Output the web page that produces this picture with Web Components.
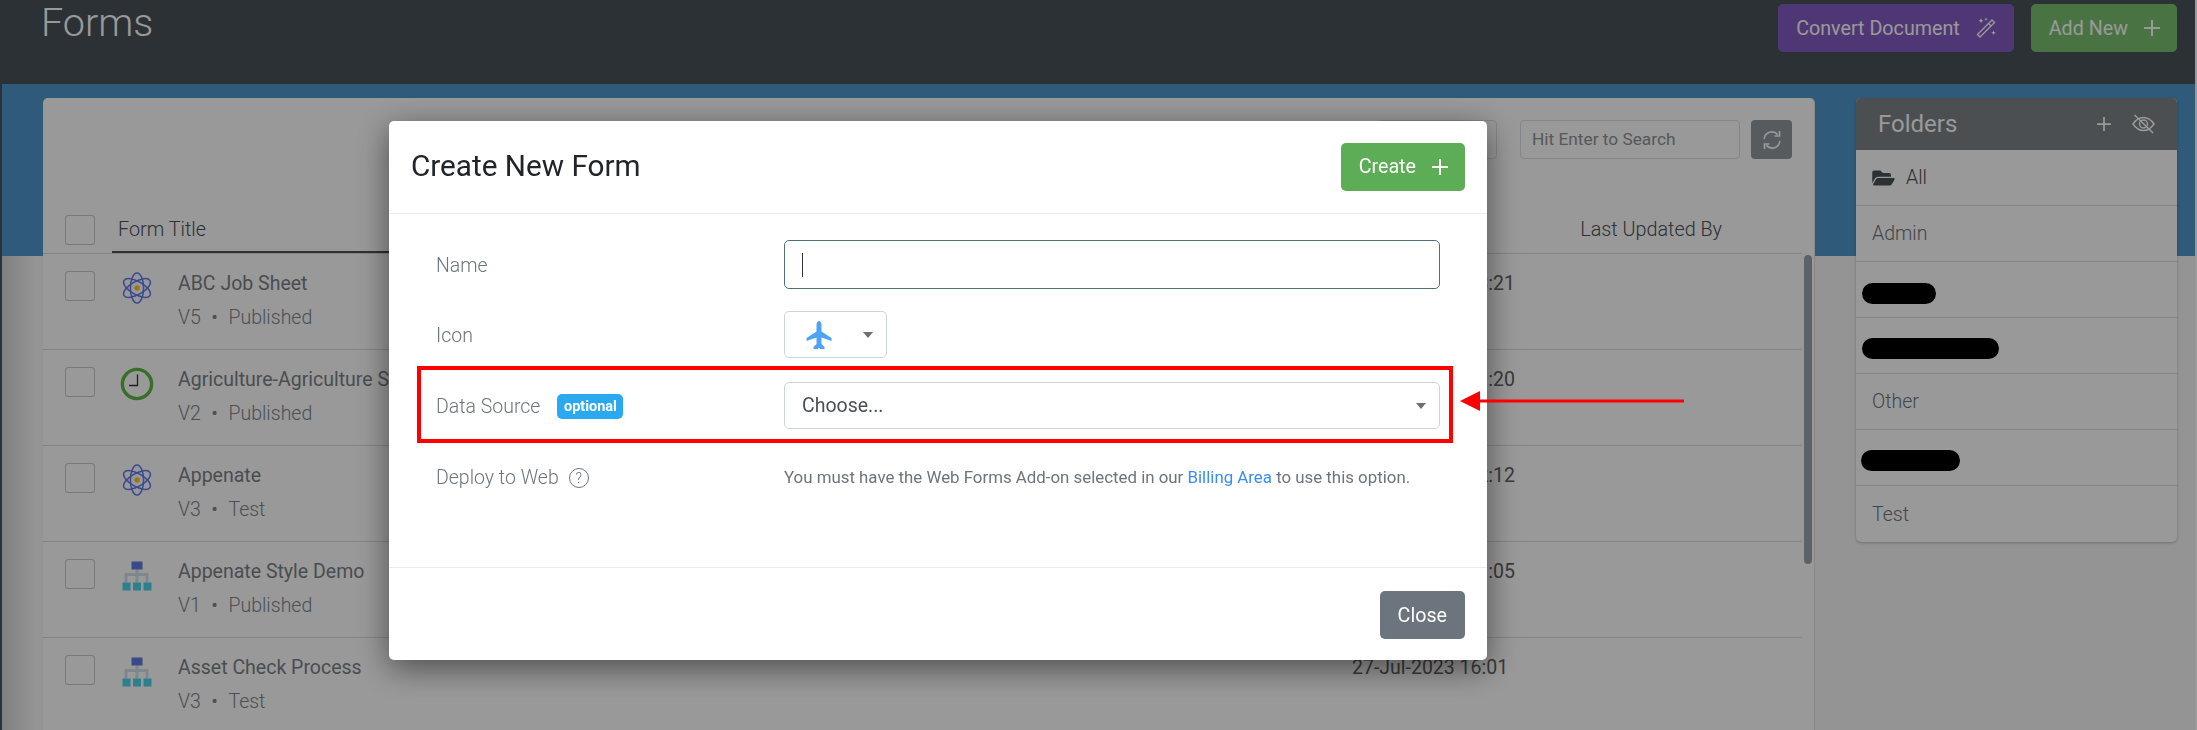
<!DOCTYPE html>
<html>
<head>
<meta charset="utf-8">
<title>Forms</title>
<style>
  html, body { margin: 0; height: 100%; overflow: hidden; }
  body {
    font-family: Roboto, "Liberation Sans", sans-serif;
    background: linear-gradient(90deg, #495257 50%, #fff 50%);
  }
</style>
</head>
<body>
<app-page>
  <page-header slot="header">
    <span slot="title">Forms</span>
    <action-button tone="purple" icon="wand">Convert Document</action-button>
    <action-button tone="lime" icon="plus">Add New</action-button>
  </page-header>
  <forms-card>
    <form-row icon="atom" version="V5" status="Published" time="3:21">ABC Job Sheet</form-row>
    <form-row icon="clock" version="V2" status="Published" time=":20">Agriculture-Agriculture S</form-row>
    <form-row icon="atom" version="V3" status="Test" time="2:12">Appenate</form-row>
    <form-row icon="tree" version="V1" status="Published" time=":05">Appenate Style Demo</form-row>
    <form-row icon="tree" version="V3" status="Test" time="27-Jul-2023 16:01" full>Asset Check Process</form-row>
  </forms-card>
  <folder-panel>
    <folder-item open>All</folder-item>
    <folder-item>Admin</folder-item>
    <folder-item redacted="74" left="6" nudge="7"></folder-item>
    <folder-item redacted="137" left="6" nudge="6"></folder-item>
    <folder-item>Other</folder-item>
    <folder-item redacted="99" left="5" nudge="5"></folder-item>
    <folder-item>Test</folder-item>
  </folder-panel>
</app-page>

<create-form-dialog></create-form-dialog>
<red-callout></red-callout>

<script>
const ICONS = {
  plus: `<svg width="16" height="16" viewBox="0 0 16 16"><path d="M8 0v16M0 8h16" stroke="currentColor" stroke-width="2" fill="none"/></svg>`,
  wand: `<svg width="21" height="22" viewBox="0 0 21 22" fill="none" stroke="currentColor"><path d="M1.5 17.5L16 3l2.5 2.5L4 20z" stroke-width="1.4"/><path d="M12.5 6.5l2.5 2.5" stroke-width="1.2"/><path d="M5 1.2l.8 1.7 1.7.8-1.7.8L5 6.2l-.8-1.7-1.7-.8 1.7-.8zM10 .5l.5 1.2 1.2.5-1.2.5-.5 1.2-.5-1.2-1.2-.5 1.2-.5zM17.5 13.5l.7 1.6 1.6.7-1.6.7-.7 1.6-.7-1.6-1.6-.7 1.6-.7z" fill="currentColor" stroke="none"/></svg>`,
  atom: `<svg width="38" height="38" viewBox="0 0 38 38" fill="none" stroke="#647bee" stroke-width="1.5"><ellipse cx="19" cy="19" rx="6.6" ry="15"/><ellipse cx="19" cy="19" rx="6.6" ry="15" transform="rotate(60 19 19)"/><ellipse cx="19" cy="19" rx="6.6" ry="15" transform="rotate(120 19 19)"/><circle cx="19" cy="19" r="2.8" fill="#ffc04c" stroke="none"/></svg>`,
  clock: `<svg width="38" height="38" viewBox="0 0 38 38" fill="none"><circle cx="19" cy="19" r="14.6" fill="#fff" stroke="#5cb846" stroke-width="3.400"/><path d="M19.5 9.5V20.5H11" stroke="#333" stroke-width="1.3"/></svg>`,
  tree: `<svg width="38" height="38" viewBox="0 0 38 38"><path d="M17.5 12.5h3V16h10v9.5h-3V19h-7v6.5h-3V19h-8v6.5h-3V16h11z" fill="#d5e1e9"/><rect x="13.5" y="4.5" width="11" height="8" fill="#627be1"/><rect x="4.5" y="25.5" width="8" height="8" fill="#4dd5eb"/><rect x="15" y="25.5" width="8" height="8" fill="#4dd5eb"/><rect x="25.5" y="25.5" width="8" height="8" fill="#4dd5eb"/></svg>`,
  sync: `<svg width="20" height="20" viewBox="0 0 20 20" fill="none" stroke="currentColor" stroke-width="1.7"><path d="M2.2 9A7.6 7.6 0 0 1 15.6 4.6"/><path d="M17.8 11A7.6 7.6 0 0 1 4.4 15.4"/><path d="M17.5 1v5h-5M2.5 19v-5h5"/></svg>`,
  eyeoff: `<svg width="23" height="20" viewBox="0 0 23 20" fill="none" stroke="currentColor" stroke-width="1.5"><path d="M1 10c3-4.400 6.400-6.500 10.500-6.500S19 5.600 22 10c-3 4.400-6.400 6.500-10.500 6.500S4 14.400 1 10z"/><circle cx="11.500" cy="10" r="4"/><path d="M2.500 1l18.500 18"/></svg>`,
  folder: `<svg width="23" height="20" viewBox="0 0 576 512"><path fill="#495257" d="M572.694 292.093L500.27 416.248A63.997 63.997 0 0 1 444.989 448H45.025c-18.523 0-30.064-20.093-20.731-36.093l72.424-124.155A64 64 0 0 1 152 256h399.964c18.523 0 30.064 20.093 20.73 36.093zM152 224h328v-48c0-26.51-21.49-48-48-48H272l-64-64H48C21.49 64 0 85.49 0 112v278.046l69.077-118.418C86.214 242.25 117.989 224 152 224z"/></svg>`,
  plane: `<svg width="26" height="28" viewBox="-1 0 26 28"><path fill="#4ea3f5" d="M12 0C13.500 0 14.500 2 14.500 4V10.500L24.500 17V20L14.500 16.500V23L17.500 26V28H13L12 26.500L11 28H6.500V26L9.500 23V16.500L-.5 20V17L9.500 10.500V4C9.500 2 10.500 0 12 0Z"/></svg>`
};

class AppPage extends HTMLElement {
  constructor() {
    super();
    this.attachShadow({ mode: "open" }).innerHTML = `
      <style>
        :host { display: block; height: 730px; margin: 0 2px; overflow: hidden; }
        main {
          display: flex;
          align-items: flex-start;
          gap: 42px;
          height: 646px;
          padding: 14px 18px 0 41px;
          box-sizing: border-box;
          background:
            linear-gradient(90deg, rgba(0, 0, 0, .14), transparent 32px) 0 172px no-repeat,
            linear-gradient(#5096cb 172px, #f7f7f7 172px);
        }
      </style>
      <slot name="header"></slot>
      <main><slot></slot></main>`;
  }
}

class PageHeader extends HTMLElement {
  constructor() {
    super();
    this.attachShadow({ mode: "open" }).innerHTML = `
      <style>
        :host {
          display: flex;
          height: 84px;
          padding: 4px 18px 0 39px;
          gap: 17px;
          box-sizing: border-box;
          align-items: flex-start;
          background: #495257;
        }
        .title { flex: 1; margin-top: -3px; font-size: 39.5px; font-weight: 300; line-height: 44px; color: #fff; }
      </style>
      <div class="title"><slot name="title"></slot></div>
      <slot></slot>`;
  }
}

class ActionButton extends HTMLElement {
  constructor() {
    super();
    const tones = { purple: "#845dc3", lime: "#7bc070", green: "#5cad56", gray: "#6c757d" };
    const tone = tones[this.getAttribute("tone")];
    const icon = ICONS[this.getAttribute("icon")] || "";
    this.attachShadow({ mode: "open" }).innerHTML = `
      <style>
        :host {
          display: inline-flex;
          align-items: center;
          gap: 16px;
          height: 48px;
          padding: 0 17px 0 18px;
          box-sizing: border-box;
          border-radius: 5px;
          background: ${tone};
          color: #fff;
          font-size: 19.7px;
          white-space: nowrap;
        }
        svg { display: block; }
      </style>
      <slot></slot>${icon}`;
  }
}

class FormsCard extends HTMLElement {
  constructor() {
    super();
    this.attachShadow({ mode: "open" }).innerHTML = `
      <style>
        :host {
          display: block;
          flex: none;
          width: 1771px;
          height: 640px;
          border-radius: 5px 5px 0 0;
          background: #fff;
          box-shadow: 1px 0 0 #e4e4e4;
        }
        .tools {
          display: flex;
          justify-content: flex-end;
          align-items: flex-start;
          height: 117px;
          padding: 22px 22px 0 0;
          box-sizing: border-box;
        }
        .box {
          height: 39px;
          box-sizing: border-box;
          border: 1px solid #dcdfe3;
          border-radius: 4px;
          font-size: 17.3px;
          line-height: 37px;
          color: #8d949a;
        }
        .other { width: 120px; margin-right: 23px; }
        .search { width: 220px; margin-right: 11px; padding-left: 11px; }
        .refresh {
          display: flex;
          align-items: center;
          justify-content: center;
          width: 41px;
          height: 39px;
          border-radius: 4px;
          background: #8f989e;
          color: #fff;
        }
        .table { display: flex; }
        .list { flex: 1; min-width: 0; }
        .head {
          display: flex;
          height: 38px;
          padding-left: 22px;
          border-bottom: 1px solid #dcdcdc;
          font-size: 19.8px;
          font-weight: 300;
          line-height: 30px;
          color: #495257;
        }
        .check { flex: none; width: 30px; height: 30px; box-sizing: border-box; border: 1px solid #c8c8c8; border-radius: 3px; background: #fff; }
        .sort { width: 300px; height: 38px; margin-left: 17px; padding-left: 6px; box-sizing: border-box; border-bottom: 2px solid #495257; }
        .by { margin-left: auto; margin-right: 80px; }
        .track { flex: none; width: 12px; padding: 40px 2px 0; box-sizing: border-box; }
        .thumb { height: 309px; border-radius: 4px; background: #9ba3a9; }
      </style>
      <div class="tools">
        <div class="box other"></div>
        <div class="box search">Hit Enter to Search</div>
        <div class="refresh">${ICONS.sync}</div>
      </div>
      <div class="table">
        <div class="list">
          <div class="head">
            <div class="check"></div>
            <div class="sort">Form Title</div>
            <div class="by">Last Updated By</div>
          </div>
          <slot></slot>
        </div>
        <div class="track"><div class="thumb"></div></div>
      </div>`;
  }
}

class FormRow extends HTMLElement {
  constructor() {
    super();
    const icon = ICONS[this.getAttribute("icon")];
    const version = this.getAttribute("version");
    const status = this.getAttribute("status");
    const time = this.getAttribute("time");
    this.attachShadow({ mode: "open" }).innerHTML = `
      <style>
        :host {
          display: grid;
          grid-template-columns: 22px 30px 23px 38px 22px 1fr 163px 287px;
          height: 96px;
          box-sizing: border-box;
          border-bottom: 1px solid #dcdcdc;
          font-size: 19.5px;
        }
        .check { grid-column: 2; width: 30px; height: 30px; margin-top: 17px; box-sizing: border-box; border: 1px solid #c8c8c8; border-radius: 3px; background: #fff; }
        .icon { grid-column: 4; margin-top: 15px; }
        .icon svg { display: block; }
        .text { grid-column: 6; padding-top: 17px; white-space: nowrap; }
        .name { line-height: 26px; color: #7a8288; }
        .sub { margin-top: 9px; line-height: 24px; font-weight: 300; color: #7c858d; }
        .dot { margin: 0 10.500px; font-weight: 400; }
        .time { grid-column: 7; padding-top: 17px; line-height: 26px; text-align: right; white-space: nowrap; color: #616161; }
        :host([full]) .time { text-align: left; }
      </style>
      <div class="check"></div>
      <div class="icon">${icon}</div>
      <div class="text">
        <div class="name"><slot></slot></div>
        <div class="sub">${version}<span class="dot">&bull;</span>${status}</div>
      </div>
      <div class="time">${time}</div>`;
  }
}

class FolderPanel extends HTMLElement {
  constructor() {
    super();
    this.attachShadow({ mode: "open" }).innerHTML = `
      <style>
        :host {
          display: block;
          flex: none;
          width: 321px;
          border-radius: 5px;
          overflow: hidden;
          background: #fff;
          box-shadow: 0 1px 3px rgba(0, 0, 0, .25);
        }
        header {
          display: flex;
          align-items: center;
          height: 52px;
          padding: 0 22px;
          background: #7d8489;
          color: #fff;
        }
        h2 { flex: 1; margin: 0; font-size: 24px; font-weight: 400; }
        .add { margin-right: 21px; }
        svg { display: block; }
      </style>
      <header>
        <h2>Folders</h2>
        <span class="add">${ICONS.plus.replace(/width="16" height="16"/, 'width="14" height="14"')}</span>
        ${ICONS.eyeoff}
      </header>
      <slot></slot>`;
  }
}

class FolderItem extends HTMLElement {
  constructor() {
    super();
    const pill = this.getAttribute("redacted");
    const inner = pill
      ? `<span class="pill" style="width:${pill}px;margin-left:${this.getAttribute("left")}px;margin-top:${this.getAttribute("nudge")}px"></span>`
      : `<span class="pad">${this.hasAttribute("open") ? ICONS.folder : ""}<slot></slot></span>`;
    this.attachShadow({ mode: "open" }).innerHTML = `
      <style>
        :host {
          display: flex;
          align-items: center;
          height: 56px;
          box-sizing: border-box;
          border-bottom: 1px solid #dcdcdc;
          font-size: 19.5px;
          font-weight: 300;
          color: #6c757d;
        }
        :host(:last-child) { border-bottom: 0; height: 56px; }
        :host([open]) { color: #495257; }
        .pad { display: flex; align-items: center; gap: 11px; padding-left: 16px; }
        .pill { height: 21px; border-radius: 11px; background: #000; }
      </style>
      ${inner}`;
  }
}

class DialogField extends HTMLElement {
  constructor() {
    super();
    this.attachShadow({ mode: "open" }).innerHTML = `
      <style>
        :host {
          display: grid;
          grid-template-columns: 348px 656px;
          align-items: center;
          min-height: 47px;
          margin: 0 0 23px 47px;
        }
        .label { display: flex; align-items: center; padding-top: 2px; font-size: 19.5px; font-weight: 300; color: #6c757d; }
      </style>
      <div class="label"><slot name="label"></slot></div>
      <div><slot></slot></div>`;
  }
}

class SelectBox extends HTMLElement {
  constructor() {
    super();
    this.attachShadow({ mode: "open" }).innerHTML = `
      <style>
        :host {
          display: flex;
          align-items: center;
          justify-content: space-between;
          height: 47px;
          padding: 0 13px 0 17px;
          box-sizing: border-box;
          border: 1px solid #ced4da;
          border-radius: 5px;
          font-size: 19.5px;
          color: #495057;
          background: #fff;
        }
        :host([compact]) { width: 103px; padding-left: 21px; }
        .caret { width: 0; height: 0; border: 5px solid transparent; border-top: 6px solid #6f6f6f; border-bottom: 0; }
        svg { display: block; }
      </style>
      <slot></slot><span class="caret"></span>`;
  }
}

class CreateFormDialog extends HTMLElement {
  constructor() {
    super();
    this.attachShadow({ mode: "open" }).innerHTML = `
      <style>
        :host {
          position: fixed;
          inset: 0;
          display: block;
          padding: 121px 0 0 389px;
          box-sizing: border-box;
          background: rgba(0, 0, 0, .4);
        }
        .dialog {
          width: 1098px;
          height: 539px;
          border-radius: 5px;
          background: #fff;
          box-shadow: 0 8px 32px rgba(0, 0, 0, .5);
          display: flex;
          flex-direction: column;
        }
        header {
          display: flex;
          align-items: center;
          justify-content: space-between;
          height: 93px;
          padding: 0 22px 1px 22px;
          box-sizing: border-box;
          border-bottom: 1px solid #e9ecef;
        }
        h1 { margin: 0 0 2px; font-size: 29.700px; font-weight: 400; color: #212529; }
        .body { flex: 1; padding-top: 26px; border-bottom: 1px solid #e9ecef; }
        .input {
          height: 49px;
          box-sizing: border-box;
          padding: 12px 0 0 17px;
          border: 1px solid #4f6f7c;
          border-radius: 5px;
        }
        .cursor { display: block; width: 1px; height: 24px; background: #333; }
        .name { margin-bottom: 22px; }
        .icon { margin-bottom: 24px; }
        .source { margin-bottom: 24px; }
        .badge {
          display: inline-block;
          width: 66px;
          height: 25px;
          margin-left: 17px;
          border-radius: 5px;
          background: #2aa9f0;
          color: #fff;
          font-size: 14.500px;
          font-weight: 700;
          line-height: 25px;
          text-align: center;
        }
        .help {
          display: inline-block;
          width: 18px;
          height: 18px;
          margin-left: 10px;
          border: 1px solid #6c757d;
          border-radius: 50%;
          font-size: 14px;
          line-height: 18px;
          text-align: center;
        }
        .note { font-size: 16.850px; color: #6c757d; white-space: nowrap; }
        .note a { color: #3b8ef0; text-decoration: none; }
        footer { display: flex; justify-content: flex-end; height: 92px; padding: 23px 22px 0 0; box-sizing: border-box; }
        footer action-button { padding: 0 18px; }
      </style>
      <div class="dialog">
        <header>
          <h1>Create New Form</h1>
          <action-button tone="green" icon="plus">Create</action-button>
        </header>
        <div class="body">
          <dialog-field class="name">
            <span slot="label">Name</span>
            <div class="input"><span class="cursor"></span></div>
          </dialog-field>
          <dialog-field class="icon">
            <span slot="label">Icon</span>
            <select-box compact>${ICONS.plane}</select-box>
          </dialog-field>
          <dialog-field class="source">
            <span slot="label">Data Source</span>
            <span slot="label" class="badge">optional</span>
            <select-box>Choose...</select-box>
          </dialog-field>
          <dialog-field>
            <span slot="label">Deploy to Web</span>
            <span slot="label" class="help">?</span>
            <div class="note">You must have the Web Forms Add-on selected in our <a href="#">Billing Area</a> to use this option.</div>
          </dialog-field>
        </div>
        <footer><action-button tone="gray">Close</action-button></footer>
      </div>`;
  }
}

// annotation drawn on top of the screenshot
class RedCallout extends HTMLElement {
  constructor() {
    super();
    this.attachShadow({ mode: "open" }).innerHTML = `
      <style>
        :host { position: fixed; left: 417px; top: 366px; width: 1036px; height: 77px; box-sizing: border-box; border: 4px solid #f00; }
        svg { position: absolute; left: 1039px; top: 20px; }
      </style>
      <svg width="224" height="22" viewBox="0 0 224 22"><path d="M0 11L20 1V9.500H224V12.500H20V21Z" fill="#f00"/></svg>`;
  }
}

customElements.define("action-button", ActionButton);
customElements.define("app-page", AppPage);
customElements.define("page-header", PageHeader);
customElements.define("forms-card", FormsCard);
customElements.define("form-row", FormRow);
customElements.define("folder-panel", FolderPanel);
customElements.define("folder-item", FolderItem);
customElements.define("dialog-field", DialogField);
customElements.define("select-box", SelectBox);
customElements.define("create-form-dialog", CreateFormDialog);
customElements.define("red-callout", RedCallout);
</script>
</body>
</html>
